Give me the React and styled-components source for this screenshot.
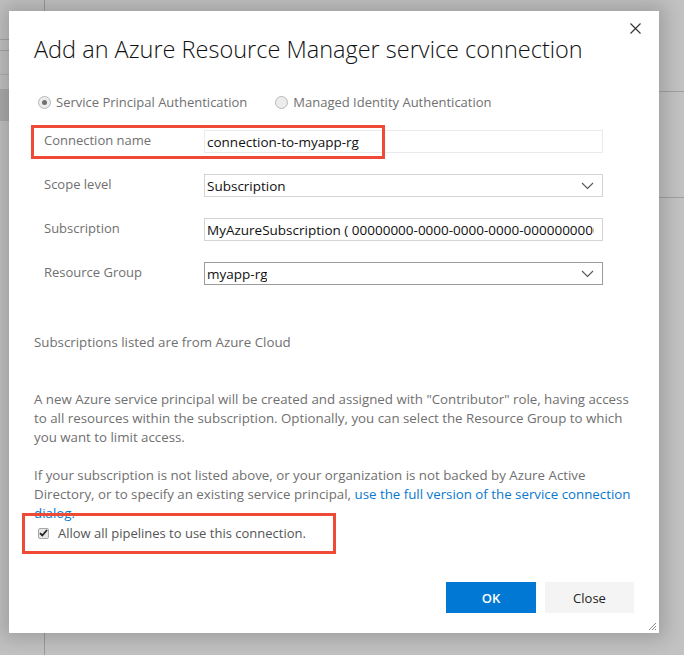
import React from 'react'
import styled, { createGlobalStyle } from 'styled-components'

const GlobalStyle = createGlobalStyle`
  html, body { margin: 0; padding: 0; }
  body {
    font-family: "Open Sans", "Noto Sans", sans-serif;
    background: #bcbcbc;
  }
`;

const Page = styled.div`
  position: relative;
  width: 684px;
  height: 655px;
  overflow: hidden;
  background: #c2c2c2;
  display: flex;
`;

const SideRail = styled.div`
  width: 44px;
  border-right: 1px solid #9a9a9a;
  display: flex;
  flex-direction: column;
`;

const RailCell = styled.div`
  height: ${p => p.$h}px;
  background: ${p => p.$bg || 'transparent'};
  border-bottom: 1px solid ${p => p.$line || 'transparent'};
`;

const MainArea = styled.div`
  flex: 1;
  display: flex;
  flex-direction: column;
  padding-top: 91px;
`;

const MainLine = styled.div`
  height: ${p => p.$h}px;
  border-top: 1px solid #a0a0a0;
`;

const Dialog = styled.div`
  position: absolute;
  left: 9px;
  top: 11px;
  width: 650px;
  height: 622px;
  box-sizing: border-box;
  background: #fff;
  box-shadow: 0 0 18px 6px rgba(0, 0, 0, 0.18);
  padding: 22px 25px 0 25px;
`;

const CloseX = styled.button`
  position: absolute;
  top: 9px;
  right: 16px;
  width: 16px;
  height: 16px;
  padding: 0;
  border: 0;
  background: none;
  display: flex;
  align-items: center;
  justify-content: center;
`;

const Title = styled.h1`
  margin: 0;
  font-family: "Open Sans", sans-serif;
  font-weight: 300;
  font-size: 23.5px;
  color: #111;
  line-height: 32px;
`;

const RadioRow = styled.div`
  display: flex;
  gap: 28px;
  margin-top: 28px;
  padding-left: 4px;
`;

const RadioOption = styled.label`
  display: flex;
  align-items: center;
  gap: 5px;
  font-size: 13px;
  color: #707070;
`;

const RadioDot = styled.span`
  width: 11px;
  height: 11px;
  border-radius: 50%;
  border: 1px solid #b8b8b8;
  background: #ececec;
  display: flex;
  align-items: center;
  justify-content: center;
  &::after {
    content: '';
    width: 5px;
    height: 5px;
    border-radius: 50%;
    background: ${p => (p.$checked ? '#707070' : 'transparent')};
  }
`;

const Form = styled.div`
  display: flex;
  flex-direction: column;
  gap: 21px;
  margin-top: 19px;
  padding-left: 10px;
  width: 559px;
`;

const FieldRow = styled.div`
  display: grid;
  grid-template-columns: 160px 1fr;
  align-items: center;
`;

const FieldLabel = styled.span`
  font-size: 13px;
  color: #707070;
  margin-top: ${p => p.$up ? '-3px' : '-4px'};
`;

const Field = styled.div`
  height: 23px;
  box-sizing: border-box;
  border: 1px solid ${p => p.$border || '#d4d4d4'};
  display: flex;
  align-items: center;
  justify-content: space-between;
  padding: 0 8px 0 2px;
  font-size: 13.5px;
  color: #111;
  white-space: nowrap;
  overflow: hidden;
`;

const FieldText = styled.span`
  overflow: hidden;
`;

const Note = styled.p`
  margin: ${p => p.$mt}px 0 0 0;
  font-size: 13.3px;
  line-height: 19px;
  color: #707070;
`;

const Link = styled.a`
  color: #0a78d0;
  text-decoration: none;
`;

const CheckRow = styled.label`
  display: flex;
  align-items: center;
  gap: 9px;
  margin-top: 1px;
  padding-left: 4px;
  font-size: 13px;
  color: #555;
  position: relative;
  z-index: 1;
`;

const CheckBox = styled.span`
  width: 11px;
  height: 11px;
  box-sizing: border-box;
  border: 1px solid #a8a8a8;
  background: #e6e6e6;
  border-radius: 2px;
  display: flex;
  align-items: center;
  justify-content: center;
`;

const Footer = styled.div`
  display: flex;
  justify-content: flex-end;
  gap: 9px;
  margin-top: 40px;
`;

const Button = styled.button`
  width: ${p => p.$w}px;
  height: 31px;
  border: 0;
  font-family: "Open Sans", sans-serif;
  font-size: 13px;
  font-weight: ${p => (p.$primary ? 600 : 400)};
  color: ${p => (p.$primary ? '#fff' : '#222')};
  background: ${p => (p.$primary ? '#0078d4' : '#f4f4f4')};
`;

const Highlight = styled.div`
  position: absolute;
  left: ${p => p.$x}px;
  top: ${p => p.$y}px;
  width: ${p => p.$w}px;
  height: ${p => p.$h}px;
  border: 3px solid #ef4a35;
  box-sizing: border-box;
  pointer-events: none;
`;

const Grip = styled.svg`
  position: absolute;
  right: 2px;
  bottom: 2px;
`;

const Chevron = () => (
  <svg width="13" height="8" viewBox="0 0 13 8">
    <path d="M1 1 L6.5 6.5 L12 1" fill="none" stroke="#555" strokeWidth="1.1" />
  </svg>
)

const App = () => {
  return (
    <>
      <GlobalStyle />
      <Page>
        <SideRail>
          <RailCell $h={39} $line="#a4a4a4" />
          <RailCell $h={10} $line="#a4a4a4" />
          <RailCell $h={23} $line="#b0b0b0" />
          <RailCell $h={13} />
          <RailCell $h={31} $bg="#acacac" />
        </SideRail>
        <MainArea>
          <MainLine $h={105} />
          <MainLine $h={40} />
        </MainArea>

        <Dialog>
          <CloseX aria-label="close">
            <svg width="11" height="11" viewBox="0 0 11 11">
              <path d="M0.5 0.5 L10.5 10.5 M10.5 0.5 L0.5 10.5" stroke="#333" strokeWidth="1.1" />
            </svg>
          </CloseX>
          <Title>Add an Azure Resource Manager service connection</Title>

          <RadioRow>
            <RadioOption><RadioDot $checked />Service Principal Authentication</RadioOption>
            <RadioOption><RadioDot />Managed Identity Authentication</RadioOption>
          </RadioRow>

          <Form>
            <FieldRow>
              <FieldLabel $up>Connection name</FieldLabel>
              <Field $border="#ebebeb"><FieldText>connection-to-myapp-rg</FieldText></Field>
            </FieldRow>
            <FieldRow>
              <FieldLabel>Scope level</FieldLabel>
              <Field><FieldText>Subscription</FieldText><Chevron /></Field>
            </FieldRow>
            <FieldRow>
              <FieldLabel>Subscription</FieldLabel>
              <Field><FieldText>MyAzureSubscription ( 00000000-0000-0000-0000-000000000000 )</FieldText></Field>
            </FieldRow>
            <FieldRow>
              <FieldLabel>Resource Group</FieldLabel>
              <Field $border="#9c9c9c"><FieldText>myapp-rg</FieldText><Chevron /></Field>
            </FieldRow>
          </Form>

          <Note $mt={48}>Subscriptions listed are from Azure Cloud</Note>
          <Note $mt={38}>
            A new Azure service principal will be created and assigned with "Contributor" role, having access
            to all resources within the subscription. Optionally, you can select the Resource Group to which
            you want to limit access.
          </Note>
          <Note $mt={19}>
            If your subscription is not listed above, or your organization is not backed by Azure Active
            Directory, or to specify an existing service principal, <Link href="#">use the full version of the service connection dialog.</Link>
          </Note>
          <CheckRow>
            <CheckBox>
              <svg width="9" height="8" viewBox="0 0 9 8">
                <path d="M1 4.2 L3.3 6.5 L8 1" fill="none" stroke="#222" strokeWidth="1.8" />
              </svg>
            </CheckBox>
            Allow all pipelines to use this connection.
          </CheckRow>

          <Footer>
            <Button $primary $w={90}>OK</Button>
            <Button $w={89}>Close</Button>
          </Footer>

          <Highlight $x={22} $y={114} $w={354} $h={34} />
          <Highlight $x={13} $y={502} $w={314} $h={41} />

          <Grip width="10" height="10" viewBox="0 0 10 10">
            <path d="M9 2 L2 9 M9 5 L5 9 M9 8 L8 9" stroke="#888" strokeWidth="1" />
          </Grip>
        </Dialog>
      </Page>
    </>
  )
}

export default App
